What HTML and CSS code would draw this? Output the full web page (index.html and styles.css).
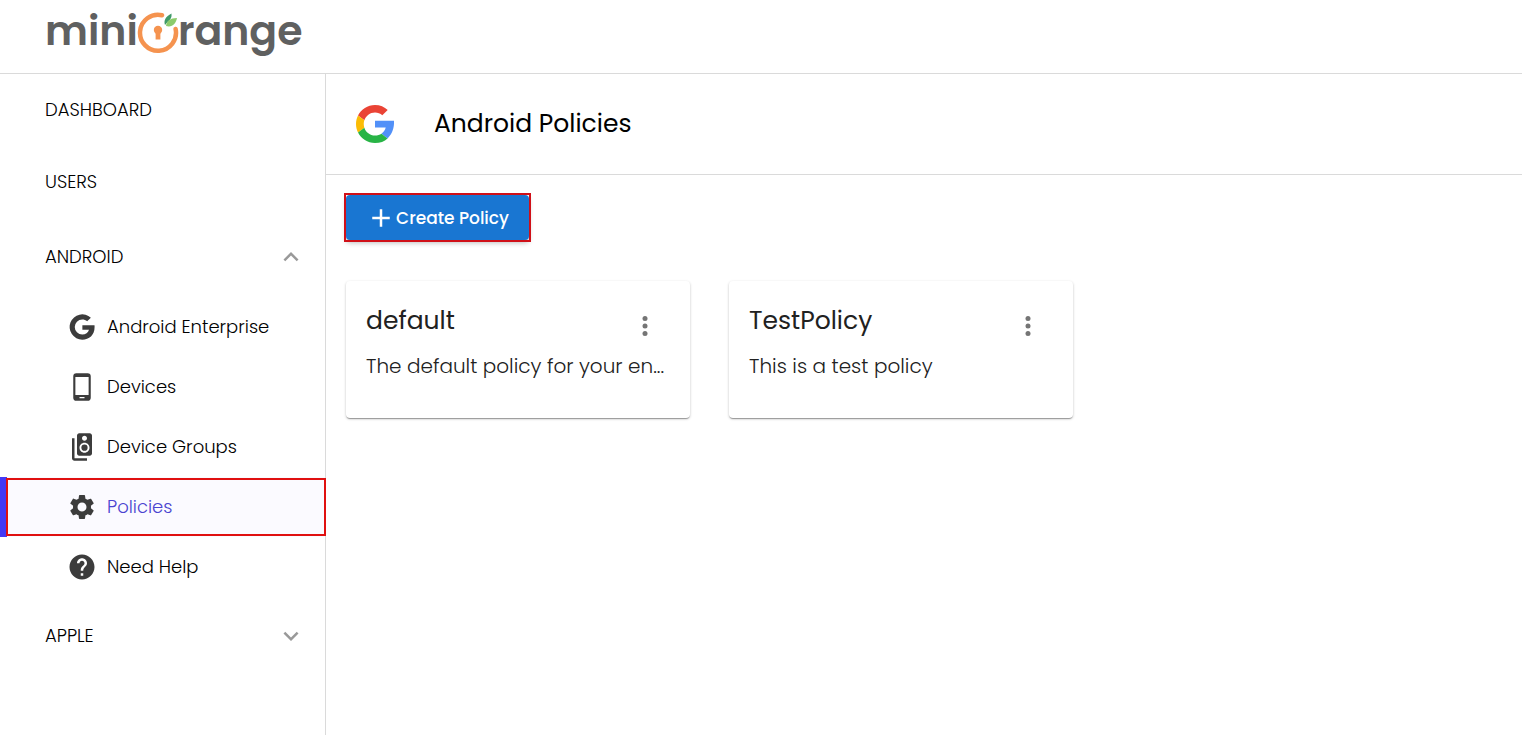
FILE: index.html
```html
<!DOCTYPE html>
<html lang="en">
<head>
  <meta charset="UTF-8">
  <meta name="viewport" content="width=device-width, initial-scale=1.0">
  <title>Android Policies</title>
  <link rel="stylesheet" href="styles.css">
</head>
<body>
  <header class="topbar">
    <a href="#" class="logo" aria-label="miniOrange">
      <span>mini</span>
      <svg class="logo-mark" viewBox="0 0 42 46" aria-hidden="true">
        <path d="M25 7.200A18 18 0 1 0 38.600 21" fill="none" stroke="#f5934f" stroke-width="4.500" stroke-linecap="round"/>
        <circle cx="21" cy="22" r="4.200" fill="#f5934f"/>
        <path d="M18.600 23h4.800v8.500h-4.800z" fill="#f5934f"/>
        <path d="M28 17c-1.500-4.500.5-8.500 6.500-11.500.5 4-1 6-3.500 8z" fill="#3f9a68"/>
        <path d="M29 18c.5-5 4-8 11-8-1 5.500-5 10-11 8z" fill="#8ccb6b"/>
      </svg>
      <span>range</span>
    </a>
  </header>

  <div class="layout">
    <nav class="sidebar">
      <a href="#" class="nav-item">DASHBOARD</a>
      <a href="#" class="nav-item">USERS</a>

      <button class="nav-group" aria-expanded="true">
        ANDROID
        <svg class="icon" viewBox="0 0 24 24"><path d="m12 8-6 6 1.410 1.410L12 10.830l4.590 4.580L18 14z"/></svg>
      </button>
      <div class="subnav">
        <a href="#">
          <svg class="icon" viewBox="0 0 24 24"><path d="M22 10.500H12.300v3.700h5.300c-.7 2.300-2.700 3.800-5.400 3.800a6 6 0 0 1 0-12c1.500 0 2.800.5 3.900 1.400l3-2.800A10.100 10.100 0 1 0 12.200 22.100c5.900 0 10.500-4.100 9.800-11.600z"/></svg>
          Android Enterprise
        </a>
        <a href="#">
          <svg class="icon" viewBox="0 0 24 24"><path fill-rule="evenodd" d="M7.500 1h9A2.500 2.500 0 0 1 19 3.500v17a2.500 2.500 0 0 1-2.500 2.500h-9A2.500 2.500 0 0 1 5 20.500v-17A2.500 2.500 0 0 1 7.500 1zM6.700 4v14.300h10.600V4zM10 20v1h4v-1z"/></svg>
          Devices
        </a>
        <a href="#">
          <svg class="icon" viewBox="0 0 24 24"><path d="M18.200 1H9.800C8.810 1 8 1.810 8 2.800v14.400c0 .99.81 1.790 1.800 1.790l8.400.01c.99 0 1.800-.81 1.800-1.800V2.800c0-.99-.81-1.800-1.800-1.800zM14 3c1.100 0 2 .89 2 2s-.9 2-2 2-2-.89-2-2 .9-2 2-2zm0 13.500c-2.210 0-4-1.790-4-4s1.790-4 4-4 4 1.790 4 4-1.790 4-4 4z"/><circle cx="14" cy="12.500" r="2.500"/><path d="M6 5H4v16c0 1.100.89 2 2 2h10v-2H6V5z"/></svg>
          Device Groups
        </a>
        <a href="#" class="active">
          <svg class="icon" viewBox="0 0 24 24"><path d="M19.140 12.940c.04-.3.06-.61.06-.94 0-.32-.02-.64-.07-.94l2.030-1.580c.18-.14.23-.41.12-.61l-1.920-3.320c-.12-.22-.37-.29-.59-.22l-2.390.96c-.5-.38-1.030-.7-1.620-.94l-.36-2.540c-.04-.24-.24-.41-.48-.41h-3.840c-.24 0-.43.17-.47.41l-.36 2.540c-.59.24-1.130.57-1.620.94l-2.390-.96c-.22-.08-.47 0-.59.22L2.740 8.870c-.12.21-.08.47.12.61l2.030 1.580c-.05.3-.09.63-.09.94s.02.64.07.94l-2.030 1.580c-.18.14-.23.41-.12.61l1.920 3.320c.12.22.37.29.59.22l2.390-.96c.5.38 1.030.7 1.620.94l.36 2.540c.05.24.24.41.48.41h3.840c.24 0 .44-.17.47-.41l.36-2.540c.59-.24 1.130-.56 1.620-.94l2.390.96c.22.08.47 0 .59-.22l1.920-3.320c.12-.22.07-.47-.12-.61zM12 15.600c-1.980 0-3.600-1.620-3.600-3.600s1.620-3.600 3.600-3.600 3.600 1.620 3.600 3.600-1.620 3.600-3.600 3.600z"/></svg>
          Policies
        </a>
        <a href="#">
          <svg class="icon" viewBox="0 0 24 24"><path d="M12 2C6.480 2 2 6.480 2 12s4.480 10 10 10 10-4.480 10-10S17.520 2 12 2zm1 17h-2v-2h2zm2.070-7.750-.9.920C13.450 12.900 13 13.500 13 15h-2v-.5c0-1.100.45-2.100 1.170-2.830l1.240-1.260c.37-.36.59-.86.59-1.410 0-1.100-.9-2-2-2s-2 .9-2 2H8c0-2.210 1.790-4 4-4s4 1.790 4 4c0 .88-.36 1.680-.93 2.250z"/></svg>
          Need Help
        </a>
      </div>

      <button class="nav-group" aria-expanded="false">
        APPLE
        <svg class="icon" viewBox="0 0 24 24"><path d="M16.590 8.590 12 13.170 7.410 8.590 6 10l6 6 6-6z"/></svg>
      </button>
    </nav>

    <main>
      <div class="page-head">
        <svg class="google" viewBox="0 0 48 48" aria-hidden="true">
          <path fill="#ea4335" d="M24 9.500c3.540 0 6.710 1.220 9.210 3.600l6.850-6.850C35.900 2.380 30.470 0 24 0 14.620 0 6.510 5.380 2.560 13.220l7.980 6.190C12.430 13.720 17.740 9.500 24 9.500z"/>
          <path fill="#5190f8" d="M48 20H24v8.500h13.500c-.6 3-2.300 5.500-5.340 7.690l7.730 6C45 37.500 48.500 30 48 20z"/>
          <path fill="#fbbc05" d="M10.530 28.590c-.48-1.450-.76-2.990-.76-4.590s.27-3.140.76-4.590l-7.980-6.190C.92 16.460 0 20.120 0 24c0 3.880.92 7.540 2.560 10.780l7.970-6.190z"/>
          <path fill="#28b446" d="M24 48c6.480 0 11.930-2.130 15.890-5.810l-7.730-6c-2.150 1.450-4.920 2.300-8.160 2.300-6.260 0-11.570-4.220-13.470-9.910l-7.980 6.190C6.510 42.620 14.620 48 24 48z"/>
        </svg>
        <h1>Android Policies</h1>
      </div>

      <div class="content">
        <button class="create">
          <svg class="icon" viewBox="0 0 24 24"><path d="M19 13h-6v6h-2v-6H5v-2h6V5h2v6h6z"/></svg>
          Create Policy
        </button>

        <div class="cards">
          <div class="card">
            <div class="card-head">
              <h2>default</h2>
              <button class="more" aria-label="More options for default">
                <svg class="icon" viewBox="0 0 24 24"><circle cx="12" cy="6" r="2"/><circle cx="12" cy="12" r="2"/><circle cx="12" cy="18" r="2"/></svg>
              </button>
            </div>
            <p>The default policy for your en...</p>
          </div>
          <div class="card">
            <div class="card-head">
              <h2>TestPolicy</h2>
              <button class="more" aria-label="More options for TestPolicy">
                <svg class="icon" viewBox="0 0 24 24"><circle cx="12" cy="6" r="2"/><circle cx="12" cy="12" r="2"/><circle cx="12" cy="18" r="2"/></svg>
              </button>
            </div>
            <p>This is a test policy</p>
          </div>
        </div>
      </div>
    </main>
  </div>
</body>
</html>
```

FILE: styles.css
```css
* { box-sizing: border-box; }
body { margin: 0; min-height: 100vh; display: flex; flex-direction: column; background: #fff; color: #000; font-family: Poppins, Inter, sans-serif; font-size: 18px; font-weight: 300; line-height: 24px; }
h1, h2, p { margin: 0; }
a { color: inherit; text-decoration: none; }
button { font: inherit; color: inherit; background: none; border: none; padding: 0; cursor: pointer; }
.icon { width: 30px; height: 30px; flex: none; fill: currentColor; }

.topbar { height: 74px; padding: 0 45px; border-bottom: 1px solid #dadada; }
.logo { display: inline-flex; align-items: center; height: 62px; color: #5f6060; font-size: 41px; font-weight: 600; line-height: 62px; }
.logo-mark { width: 42px; height: 46px; margin: 0 -1px; }

.layout { display: flex; flex: 1; }
.sidebar { width: 326px; flex: none; border-right: 1px solid #dadada; }
.nav-item { display: flex; align-items: center; height: 72px; padding-left: 45px; }
.nav-group { display: flex; align-items: center; justify-content: space-between; width: 100%; height: 78px; padding: 0 19px 0 45px; }
.nav-group .icon { fill: #999; }
.subnav { padding-top: 1px; }
.subnav a { position: relative; display: flex; align-items: center; gap: 10px; height: 60px; padding-left: 60px; border-left: 7px solid transparent; }
.subnav .icon { fill: #3c3c3c; }
.subnav a.active { color: #4a43d0; background: #fbfaff; border-left-color: #4338f5; }
.subnav a.active::after { content: ""; position: absolute; inset: 1px -1px 1px -1px; border: 2px solid #e01010; }

main { flex: 1; min-width: 0; }
.page-head { display: flex; align-items: center; gap: 40px; height: 101px; padding: 0 30px; border-bottom: 1px solid #dadada; }
.google { width: 38px; height: 38px; }
h1 { font-size: 25px; font-weight: 400; }
.content { padding: 20px; }
.create { display: flex; align-items: center; height: 45px; padding: 0 20px; border-radius: 4px; background: #1976d2; color: #fff; font-size: 17px; font-weight: 500; box-shadow: 0 3px 5px rgba(0, 0, 0, 0.25); position: relative; }
.create::after { content: ""; position: absolute; inset: -2px; border: 2px solid #d01018; }

.cards { display: flex; flex-wrap: wrap; gap: 39px; margin-top: 41px; }
.card { width: 344px; height: 137px; padding: 20px; border-radius: 4px; color: #212121; box-shadow: 0 2px 1px -1px rgba(0, 0, 0, 0.2), 0 1px 1px rgba(0, 0, 0, 0.14), 0 1px 3px rgba(0, 0, 0, 0.2); }
.card-head { display: flex; justify-content: space-between; height: 50px; }
h2 { font-size: 25px; font-weight: 400; line-height: 40px; }
.more { width: 50px; height: 50px; padding-top: 6px; color: #757575; }
.card p { font-size: 20px; line-height: 30px; white-space: nowrap; }
```
